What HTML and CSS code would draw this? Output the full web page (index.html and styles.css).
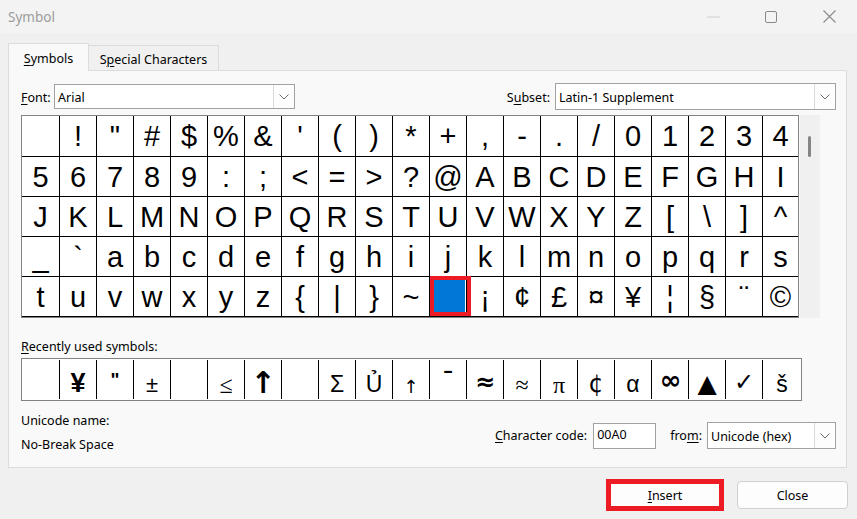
FILE: index.html
```html
<!DOCTYPE html>
<html lang="en">
<head>
    <meta charset="UTF-8">
    <title>Symbol</title>
    <link rel="stylesheet" href="styles.css">
</head>
<body>

<div class="window">
    <div class="titlebar">
        <span class="title">Symbol</span>
        <div class="controls">
            <div class="ctl"><svg width="13" height="2" viewBox="0 0 13 2"><line x1="0" y1="1" x2="13" y2="1" stroke="#cfcfcf" stroke-width="1"/></svg></div>
            <div class="ctl"><svg width="12" height="12" viewBox="0 0 12 12"><rect x="0.5" y="0.5" width="11" height="11" rx="1.5" fill="none" stroke="#8a8a8a" stroke-width="1"/></svg></div>
            <div class="ctl"><svg width="13" height="13" viewBox="0 0 13 13"><path d="M0.5 0.5 L12.5 12.5 M12.5 0.5 L0.5 12.5" stroke="#8a8a8a" stroke-width="1.1"/></svg></div>
        </div>
    </div>

    <div class="tabs">
        <div class="tab active"><u>S</u>ymbols</div>
        <div class="tab">S<u>p</u>ecial Characters</div>
    </div>

    <div class="panel">
        <div class="pickers">
            <label class="font-label"><u>F</u>ont:</label>
            <div class="select font-select">
                <span class="select-text">Arial</span>
                <span class="drop"><svg width="10" height="6" viewBox="0 0 10 6"><polyline points="0.5,0.5 5,5 9.5,0.5" fill="none" stroke="#6b6b6b" stroke-width="1"/></svg></span>
            </div>
            <label class="subset-label">S<u>u</u>bset:</label>
            <div class="select subset-select">
                <span class="select-text">Latin-1 Supplement</span>
                <span class="drop"><svg width="10" height="6" viewBox="0 0 10 6"><polyline points="0.5,0.5 5,5 9.5,0.5" fill="none" stroke="#6b6b6b" stroke-width="1"/></svg></span>
            </div>
        </div>

        <div class="grid-row">
            <div class="chars">
                <div class="c"></div><div class="c">!</div><div class="c">&quot;</div><div class="c">#</div><div class="c">$</div><div class="c">%</div><div class="c">&amp;</div><div class="c">'</div><div class="c">(</div><div class="c">)</div><div class="c">*</div><div class="c">+</div><div class="c">,</div><div class="c">-</div><div class="c">.</div><div class="c">/</div><div class="c">0</div><div class="c">1</div><div class="c">2</div><div class="c">3</div><div class="c">4</div>
                <div class="c">5</div><div class="c">6</div><div class="c">7</div><div class="c">8</div><div class="c">9</div><div class="c">:</div><div class="c">;</div><div class="c">&lt;</div><div class="c">=</div><div class="c">&gt;</div><div class="c">?</div><div class="c">@</div><div class="c">A</div><div class="c">B</div><div class="c">C</div><div class="c">D</div><div class="c">E</div><div class="c">F</div><div class="c">G</div><div class="c">H</div><div class="c">I</div>
                <div class="c">J</div><div class="c">K</div><div class="c">L</div><div class="c">M</div><div class="c">N</div><div class="c">O</div><div class="c">P</div><div class="c">Q</div><div class="c">R</div><div class="c">S</div><div class="c">T</div><div class="c">U</div><div class="c">V</div><div class="c">W</div><div class="c">X</div><div class="c">Y</div><div class="c">Z</div><div class="c">[</div><div class="c">\</div><div class="c">]</div><div class="c">^</div>
                <div class="c">_</div><div class="c">`</div><div class="c">a</div><div class="c">b</div><div class="c">c</div><div class="c">d</div><div class="c">e</div><div class="c">f</div><div class="c">g</div><div class="c">h</div><div class="c">i</div><div class="c">j</div><div class="c">k</div><div class="c">l</div><div class="c">m</div><div class="c">n</div><div class="c">o</div><div class="c">p</div><div class="c">q</div><div class="c">r</div><div class="c">s</div>
                <div class="c">t</div><div class="c">u</div><div class="c">v</div><div class="c">w</div><div class="c">x</div><div class="c">y</div><div class="c">z</div><div class="c">{</div><div class="c">|</div><div class="c">}</div><div class="c">~</div><div class="c sel"></div><div class="c">¡</div><div class="c">¢</div><div class="c">£</div><div class="c">¤</div><div class="c">¥</div><div class="c">¦</div><div class="c">§</div><div class="c">¨</div><div class="c">©</div>
            </div>
            <div class="scroll"><div class="thumb"></div></div>
        </div>

        <div class="recent-label"><u>R</u>ecently used symbols:</div>
        <div class="recent">
            <div class="r"></div>
            <div class="r yen">¥</div>
            <div class="r quot">&quot;</div>
            <div class="r">±</div>
            <div class="r"></div>
            <div class="r serif">≤</div>
            <div class="r arrow">↑</div>
            <div class="r"></div>
            <div class="r plain">Σ</div>
            <div class="r plain">Ủ</div>
            <div class="r small">↑</div>
            <div class="r macron">ˉ</div>
            <div class="r bold">≈</div>
            <div class="r serif">≈</div>
            <div class="r serif">π</div>
            <div class="r cent">¢</div>
            <div class="r plain">α</div>
            <div class="r inf">∞</div>
            <div class="r tri">▲</div>
            <div class="r tick">✓</div>
            <div class="r plain">š</div>
        </div>

        <div class="info">
            <div class="uname">
                <div>Unicode name:</div>
                <div>No-Break Space</div>
            </div>
            <div class="code">
                <label><u>C</u>haracter code:</label>
                <div class="code-input">00A0</div>
                <label class="from-label">fro<u>m</u>:</label>
                <div class="select from-select">
                    <span class="select-text">Unicode (hex)</span>
                    <span class="drop"><svg width="10" height="6" viewBox="0 0 10 6"><polyline points="0.5,0.5 5,5 9.5,0.5" fill="none" stroke="#6b6b6b" stroke-width="1"/></svg></span>
                </div>
            </div>
        </div>
    </div>

    <div class="buttons">
        <button class="btn insert"><u>I</u>nsert</button>
        <button class="btn">Close</button>
    </div>
</div>

</body>
</html>
```

FILE: styles.css
```css
body {
    margin: 0;
    background-color: #f0f0f0;
    font-family: "Noto Sans", "Open Sans", sans-serif;
    font-size: 12.5px;
    color: #000;
}
u {
    text-decoration-thickness: 1px;
    text-underline-offset: 2px;
}
.window {
    width: 857px;
    height: 519px;
    overflow: hidden;
}
.titlebar {
    height: 33px;
    display: flex;
    align-items: center;
    justify-content: space-between;
    background-color: #f3f3f3;
    padding-left: 8px;
}
.title {
    color: #9c9c9c;
    font-size: 13.5px;
}
.controls {
    display: flex;
    height: 100%;
    margin-right: -1px;
}
.ctl {
    width: 58px;
    display: flex;
    align-items: center;
    justify-content: center;
}
.tabs {
    display: flex;
    align-items: flex-end;
    padding-left: 8px;
    margin-top: 10px;
    height: 27px;
}
.tab {
    box-sizing: border-box;
    height: 25px;
    width: 130px;
    border: 1px solid #dcdcdc;
    border-bottom: none;
    border-left: none;
    text-align: center;
    line-height: 27px;
}
.tab.active {
    width: 81px;
    height: 28px;
    line-height: 30px;
    border-left: 1px solid #dcdcdc;
    background-color: #f9f9f9;
    margin-bottom: -1px;
    position: relative;
}
.panel {
    box-sizing: border-box;
    height: 398px;
    margin: 0 10px 0 8px;
    border: 1px solid #dcdcdc;
    background-color: #f9f9f9;
    padding: 12px 10px 0 12px;
}
.pickers {
    display: flex;
    align-items: center;
    height: 27px;
}
.font-label {
    width: 33px;
    padding-top: 1px;
}
.subset-label {
    margin-left: auto;
    margin-right: 5px;
    padding-top: 1px;
}
.select {
    box-sizing: border-box;
    display: flex;
    align-items: stretch;
    border: 1px solid #a2a2a2;
    background-color: #fff;
}
.font-select {
    width: 241px;
    height: 25px;
}
.subset-select {
    width: 281px;
    height: 27px;
}
.select-text {
    padding: 1px 0 0 3px;
    display: flex;
    align-items: center;
}
.drop {
    width: 20px;
    margin-left: auto;
    border-left: 1px solid #dadada;
    background-color: #fdfdfd;
    display: flex;
    align-items: center;
    justify-content: center;
}
.grid-row {
    display: flex;
    margin-top: 5px;
}
.chars {
    display: grid;
    grid-template-columns: 37px repeat(19, 36px) 35px;
    grid-template-rows: 40px repeat(4, 39px);
    gap: 1px;
    background-color: #000;
    border: 1px solid #828282;
    padding-bottom: 1px;
}
.c {
    background-color: #fff;
    text-align: center;
    font-family: "Liberation Sans", Arial, sans-serif;
    font-size: 29px;
    line-height: 41px;
    overflow: hidden;
}
.c.sel {
    background-color: #0078d7;
    border: 1px solid #fff;
    position: relative;
    overflow: visible;
}
.c.sel::after {
    content: "";
    position: absolute;
    left: -1px;
    top: -2px;
    right: -6px;
    bottom: -1px;
    border: 4px solid #ed1c24;
}
.scroll {
    width: 20px;
    margin-left: 1px;
    background-color: #f0f0f0;
}
.thumb {
    width: 3px;
    height: 21px;
    margin: 21px 0 0 8px;
    border-radius: 2px;
    background-color: #858585;
}
.recent-label {
    margin-top: 21px;
    line-height: 16px;
}
.recent {
    display: grid;
    grid-template-columns: 38px repeat(19, 37px) 38px;
    width: 779px;
    margin-top: 3px;
    border: 1px solid #828282;
    background-color: #fff;
    padding: 1px 0;
}
.r {
    height: 39px;
    border-right: 1px solid #000;
    text-align: center;
    font-family: "Liberation Sans", Arial, sans-serif;
    font-size: 22px;
    line-height: 50px;
    overflow: hidden;
}
.r:last-child {
    border-right: none;
}
.r.plain {
    font-size: 23px;
    line-height: 48px;
}
.r.serif {
    font-family: "Liberation Serif", serif;
    font-size: 24px;
    line-height: 50px;
}
.r.cent {
    font-family: "DejaVu Sans", sans-serif;
    font-size: 24px;
    line-height: 48px;
}
.r.yen {
    font-weight: bold;
    font-size: 27px;
    line-height: 46px;
}
.r.quot {
    font-weight: bold;
    font-size: 19px;
    line-height: 40px;
}
.r.arrow {
    font-family: "DejaVu Sans", sans-serif;
    font-weight: bold;
    font-size: 30px;
    line-height: 46px;
}
.r.small {
    font-family: "DejaVu Sans", sans-serif;
    font-size: 18px;
    line-height: 54px;
}
.r.macron {
    font-weight: bold;
    font-size: 26px;
    line-height: 38px;
}
.r.bold {
    font-family: "DejaVu Sans", sans-serif;
    font-weight: bold;
    font-size: 24px;
    line-height: 44px;
}
.r.inf {
    box-sizing: border-box;
    padding-top: 2px;
    font-family: "DejaVu Sans", sans-serif;
    font-weight: bold;
    font-size: 26px;
    line-height: 37px;
    letter-spacing: -1px;
}
.r.tri {
    font-family: "DejaVu Sans", sans-serif;
    font-size: 25px;
    line-height: 48px;
}
.r.tick {
    font-family: "DejaVu Sans", sans-serif;
    font-size: 24px;
    line-height: 44px;
}
.info {
    display: flex;
    margin-top: 8px;
}
.uname {
    line-height: 24px;
}
.code {
    display: flex;
    align-items: center;
    margin-left: auto;
    margin-top: 13px;
    height: 27px;
}
.code label {
    margin-right: 6px;
}
.code .from-label {
    margin-left: 14px;
    margin-right: 5px;
}
.code-input {
    box-sizing: border-box;
    width: 63px;
    height: 26px;
    border: 1px solid #a2a2a2;
    background-color: #fff;
    padding-left: 3px;
    line-height: 22px;
}
.from-select {
    width: 129px;
    height: 27px;
}
.buttons {
    display: flex;
    justify-content: flex-end;
    align-items: center;
    gap: 13px;
    margin-top: 11px;
    padding-right: 9px;
}
.btn {
    box-sizing: border-box;
    width: 111px;
    height: 28px;
    border: 1px solid #d0d0d0;
    border-radius: 4px;
    background-color: #fdfdfd;
    font-family: "Noto Sans", "Open Sans", sans-serif;
    font-size: 12.5px;
    color: #000;
    padding: 1px 0 0;
}
.btn.insert {
    width: 118px;
    height: 32px;
    border: 5px solid #ed1c24;
    border-radius: 0;
}
```
